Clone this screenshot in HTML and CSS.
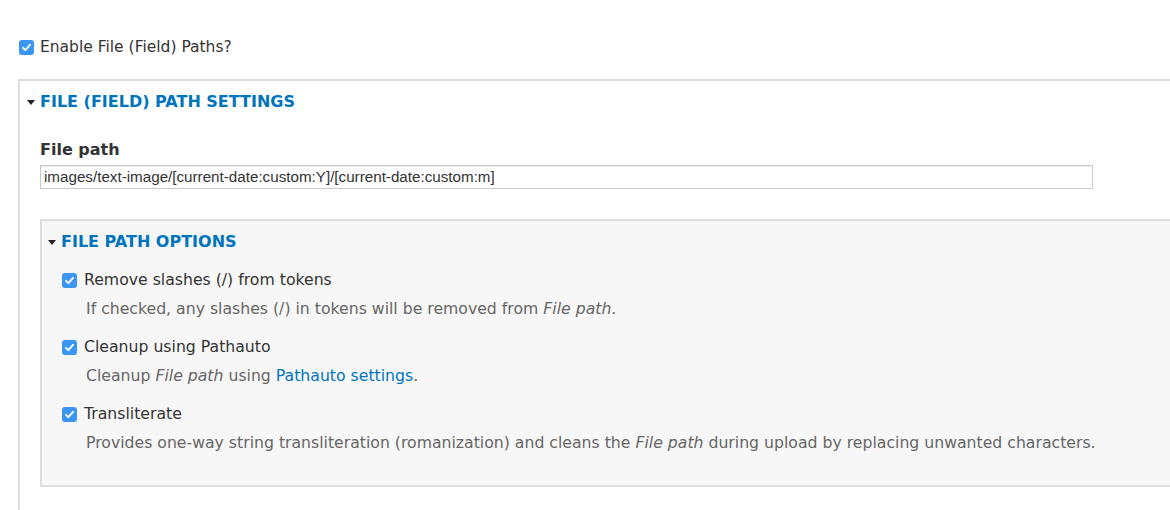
FILE: index.html
```html
<!DOCTYPE html>
<html>
<head>
<meta charset="utf-8">
<link rel="stylesheet" href="styles.css">
</head>
<body>
<div class="enable">
  <span class="cb"><svg viewBox="0 0 15 15" width="15" height="15"><path d="M4 7.8 L6.4 10.2 L11 4.8" fill="none" stroke="#fff" stroke-width="1.8" stroke-linecap="round" stroke-linejoin="round"/></svg></span>
  <span class="enable-text">Enable File (Field) Paths?</span>
</div>
<div class="outer">
  <div class="legend outer-legend"><span class="tri"></span><span>FILE (FIELD) PATH SETTINGS</span></div>
  <div class="label">File path</div>
  <div class="input">images/text-image/[current-date:custom:Y]/[current-date:custom:m]</div>
  <div class="inner">
    <div class="legend inner-legend"><span class="tri"></span><span>FILE PATH OPTIONS</span></div>
    <div class="item">
      <div class="item-label"><span class="cb"><svg viewBox="0 0 15 15" width="15" height="15"><path d="M4 7.8 L6.4 10.2 L11 4.8" fill="none" stroke="#fff" stroke-width="1.8" stroke-linecap="round" stroke-linejoin="round"/></svg></span><span>Remove slashes (/) from tokens</span></div>
      <div class="desc">If checked, any slashes (/) in tokens will be removed from <em>File path</em>.</div>
    </div>
    <div class="item">
      <div class="item-label"><span class="cb"><svg viewBox="0 0 15 15" width="15" height="15"><path d="M4 7.8 L6.4 10.2 L11 4.8" fill="none" stroke="#fff" stroke-width="1.8" stroke-linecap="round" stroke-linejoin="round"/></svg></span><span>Cleanup using Pathauto</span></div>
      <div class="desc">Cleanup <em>File path</em> using <a href="#">Pathauto settings</a>.</div>
    </div>
    <div class="item">
      <div class="item-label"><span class="cb"><svg viewBox="0 0 15 15" width="15" height="15"><path d="M4 7.8 L6.4 10.2 L11 4.8" fill="none" stroke="#fff" stroke-width="1.8" stroke-linecap="round" stroke-linejoin="round"/></svg></span><span>Transliterate</span></div>
      <div class="desc">Provides one-way string transliteration (romanization) and cleans the <em>File path</em> during upload by replacing unwanted characters.</div>
    </div>
  </div>
</div>
</body>
</html>
```

FILE: styles.css
```css
html, body {
  margin: 0;
  padding: 0;
  background: #fff;
  overflow: hidden;
}
body {
  font-family: "DejaVu Sans", sans-serif;
  font-size: 15.7px;
  color: #333;
  width: 1170px;
  height: 510px;
}
.cb {
  display: inline-flex;
  width: 15px;
  height: 15px;
  flex: 0 0 15px;
  border-radius: 3px;
  background: #3b96f3;
}
.cb svg { display: block; }
.enable {
  display: flex;
  align-items: center;
  gap: 6px;
  padding: 40px 0 0 19px;
  height: 15px;
  line-height: 15px;
}
.enable-text {
  color: #333;
  font-size: 15.5px;
}
.outer {
  margin: 24px -30px 0 18px;
  border-top: 2px solid #dedede;
  border-left: 2px solid #dedede;
  padding: 0 0 40px 20px;
}
.legend {
  display: flex;
  align-items: center;
  gap: 5px;
  font-weight: bold;
  color: #0074bd;
  line-height: 18px;
  height: 18px;
}
.outer-legend {
  margin-left: -13px;
  padding-top: 12px;
  font-size: 16px;
}
.tri {
  width: 0;
  height: 0;
  border-left: 4px solid transparent;
  border-right: 4px solid transparent;
  border-top: 5px solid #222;
  margin-top: 1px;
}
.label {
  margin-top: 29px;
  font-weight: bold;
  font-size: 16px;
  line-height: 20px;
  color: #333;
}
.input {
  margin-top: 5px;
  width: 1053px;
  height: 24px;
  box-sizing: border-box;
  border: 1px solid #c8c8c8;
  box-shadow: inset 0 1px 1px rgba(0,0,0,0.08);
  font-family: "Liberation Sans", Arial, sans-serif;
  font-size: 15.2px;
  line-height: 22px;
  padding: 0 3px;
  color: #333;
  background: #fff;
}
.inner {
  margin-top: 30px;
  background: #f7f7f7;
  border-top: 2px solid #dedede;
  border-left: 2px solid #dedede;
  border-bottom: 2px solid #dedede;
  padding: 0 0 33px 20px;
}
.inner-legend {
  margin-left: -14px;
  padding-top: 12px;
  font-size: 16px;
}
.item {
  margin-top: 20px;
}
.item + .item {
  margin-top: 20px;
}
.item-label {
  display: flex;
  align-items: center;
  gap: 7px;
  height: 18px;
  line-height: 18px;
  color: #333;
}
.desc {
  margin-top: 11px;
  margin-left: 24px;
  line-height: 18px;
  color: #666;
}
.desc a {
  color: #0074bd;
  text-decoration: none;
}
```
